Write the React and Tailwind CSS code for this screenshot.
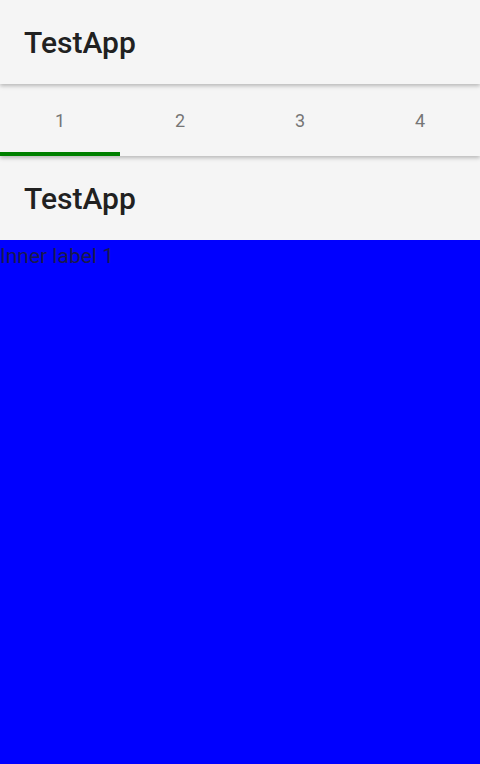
export default function App() {
  const tabs = ["1", "2", "3", "4"];
  return (
    <div className="flex flex-col h-[764px] w-[480px] bg-[#f5f5f5] font-['Roboto',sans-serif] overflow-hidden">
      <div className="relative z-20 h-[84px] shrink-0 flex items-center px-6 pt-[2px] bg-[#f5f5f5] shadow-[0_2px_4px_rgba(0,0,0,0.25)]">
        <span className="text-[30px] font-medium text-[#212121] leading-none">TestApp</span>
      </div>
      <div className="relative z-10 h-[72px] shrink-0 flex bg-[#f5f5f5] shadow-[0_2px_4px_rgba(0,0,0,0.25)]">
        {tabs.map((t, i) => (
          <div key={t} className="relative flex-1 flex items-center justify-center pt-[1px] text-[18px] text-[#757575]">
            {t}
            {i === 0 && <div className="absolute left-0 right-0 bottom-0 h-[4px] bg-[#008000]" />}
          </div>
        ))}
      </div>
      <div className="h-[84px] shrink-0 flex items-center px-6 pt-[2px] bg-[#f5f5f5]">
        <span className="text-[30px] font-medium text-[#212121] leading-none">TestApp</span>
      </div>
      <div className="flex-1 bg-[#0000ff]">
        <div className="text-[21px] leading-[32px] text-[#1a1a4d]">Inner label 1</div>
      </div>
    </div>
  );
}
